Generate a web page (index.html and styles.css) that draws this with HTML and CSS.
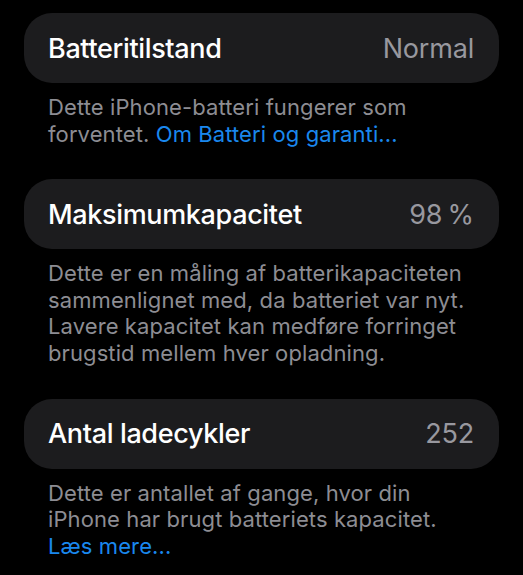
FILE: index.html
```html
<!DOCTYPE html>
<html lang="da">
<head>
    <meta charset="UTF-8">
    <meta name="viewport" content="width=device-width, initial-scale=1.0">
    <title>Batteritilstand</title>
    <link rel="stylesheet" href="styles.css">
</head>
<body>

<div class="settings-list">
    <div class="row-card">
        <span class="row-title">Batteritilstand</span>
        <span class="row-value">Normal</span>
    </div>
    <p class="row-footer">Dette iPhone-batteri fungerer som forventet. <a href="#">Om Batteri og garanti...</a></p>

    <div class="row-card">
        <span class="row-title">Maksimumkapacitet</span>
        <span class="row-value">98&#8239;%</span>
    </div>
    <p class="row-footer">Dette er en måling af batterikapaciteten sammenlignet med, da batteriet var nyt. Lavere kapacitet kan medføre forringet brugstid mellem hver opladning.</p>

    <div class="row-card">
        <span class="row-title">Antal ladecykler</span>
        <span class="row-value">252</span>
    </div>
    <p class="row-footer">Dette er antallet af gange, hvor din iPhone har brugt batteriets kapacitet.<br><a href="#">Læs mere...</a></p>
</div>

</body>
</html>
```

FILE: styles.css
```css
body {
    margin: 0;
    background-color: #000;
    font-family: Inter, "Noto Sans", sans-serif;
    color: #fff;
}
.settings-list {
    padding: 13px 24px 0 24px;
}
.row-card {
    display: flex;
    align-items: center;
    justify-content: space-between;
    height: 70px;
    padding: 0 25px 0 24px;
    background-color: #1c1c1e;
    border-radius: 28px;
}
.row-title {
    font-size: 27px;
    font-weight: 500;
    letter-spacing: -0.35px;
}
.row-value {
    font-size: 27px;
    font-weight: 400;
    letter-spacing: -0.2px;
    color: #98989f;
}
.row-footer {
    margin: 0 0 32px 0;
    padding: 11px 24px 0 24px;
    font-size: 22px;
    letter-spacing: 0.1px;
    line-height: 26.6px;
    color: #8d8d93;
}
.row-footer a {
    color: #1a88ee;
    text-decoration: none;
}
```
